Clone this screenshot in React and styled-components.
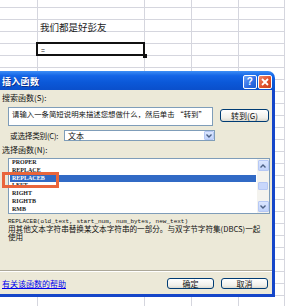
import React from "react";
import styled, { createGlobalStyle, css } from "styled-components";

const GlobalStyle = createGlobalStyle`
  html, body {
    margin: 0;
    padding: 0;
    overflow: hidden;
    background: #fff;
  }
`;

const CJK = `"Noto Sans CJK SC", "Liberation Sans", sans-serif`;

const Screen = styled.div`
  position: relative;
  width: 285px;
  height: 306px;
  overflow: hidden;
  background: #fff;
  font-family: ${CJK};
`;

const Sheet = styled.div`
  display: grid;
  grid-template-columns: 38px 107px 47px 47px 46px;
  grid-template-rows: 8px;
  grid-auto-rows: 12px;
`;

const Cell = styled.div`
  position: relative;
  box-sizing: border-box;
  border-right: 1px solid #d5d6de;
  border-bottom: 1px solid #d5d6de;
  padding: 1px 0 0 2px;
  font-size: 9.5px;
  line-height: 13px;
  white-space: nowrap;
  color: #1a1a1a;
  ${(p) =>
    p.$active &&
    css`
      font-size: 7px;
      line-height: 10px;
      padding-left: 3px;
      &::after {
        content: "";
        position: absolute;
        left: -2px;
        top: -2px;
        right: -1px;
        bottom: -1px;
        border: 2px solid #111;
      }
      &::before {
        content: "";
        position: absolute;
        right: -3px;
        bottom: -3px;
        width: 4px;
        height: 4px;
        background: #111;
        z-index: 1;
      }
    `}
`;

const Dialog = styled.div`
  position: absolute;
  left: -3px;
  top: 71px;
  width: 278px;
  display: flex;
  flex-direction: column;
`;

const TitleBar = styled.div`
  height: 19px;
  box-sizing: border-box;
  display: flex;
  align-items: center;
  padding: 2px 3px 0 5px;
  border-radius: 0 7px 0 0;
  background: linear-gradient(
    to bottom,
    #3d8ef5 0%,
    #1465e6 25%,
    #0b58d8 60%,
    #0a4fcb 100%
  );
  color: #fff;
  font-weight: bold;
  font-size: 9px;
  letter-spacing: 0.3px;
`;

const TitleText = styled.span`
  flex: 1;
  text-shadow: 1px 1px 0 #0a2d8a;
`;

const TitleButton = styled.div`
  width: 14px;
  height: 14px;
  box-sizing: border-box;
  margin-left: 1px;
  border: 1px solid #fff;
  border-radius: 2px;
  display: flex;
  align-items: center;
  justify-content: center;
  color: #fff;
  font-family: "Liberation Sans", sans-serif;
  font-weight: bold;
  font-size: 10px;
  background: ${(p) =>
    p.$close
      ? "linear-gradient(135deg, #f08a6c 0%, #e0512c 55%, #c8401f 100%)"
      : "linear-gradient(135deg, #6fa2f7 0%, #2d6ce4 60%, #1f57cf 100%)"};
`;

const Body = styled.div`
  height: 204px;
  display: flex;
  flex-direction: column;
  background: #ece9d8;
  border: 3px solid #1546c9;
  border-top: 0;
  font-size: 8px;
  color: #111;
`;

const Label = styled.div`
  height: 12px;
  line-height: 12px;
  margin-top: ${(p) => p.$top || 0}px;
  padding-left: ${(p) => p.$left || 2}px;
  white-space: nowrap;
`;

const Row = styled.div`
  display: flex;
  align-items: flex-start;
  margin-top: ${(p) => p.$top || 0}px;
  padding-left: ${(p) => p.$left || 0}px;
`;

const SearchBox = styled.div`
  width: 205px;
  height: 19px;
  box-sizing: border-box;
  margin-left: 8px;
  padding: 1px 0 0 3px;
  background: #fff;
  border: 1px solid #7f9db9;
  font-size: 7.4px;
  line-height: 10px;
  white-space: nowrap;
  overflow: hidden;
`;

const Button = styled.div`
  width: ${(p) => p.$w || 47}px;
  height: ${(p) => p.$h || 11}px;
  box-sizing: border-box;
  margin-left: ${(p) => p.$ml || 0}px;
  margin-top: ${(p) => p.$mt || 0}px;
  border: 1px solid #003c74;
  border-radius: 3px;
  background: linear-gradient(to bottom, #ffffff 0%, #f1f0ea 70%, #dcdad0 100%);
  display: flex;
  align-items: center;
  justify-content: center;
  line-height: 1;
  font-size: 8px;
`;

const CategoryLabel = styled.div`
  width: 54px;
  height: 11px;
  line-height: 11px;
  white-space: nowrap;
  font-size: 7.6px;
  letter-spacing: -0.2px;
`;

const Combo = styled.div`
  width: 151px;
  height: 11px;
  box-sizing: border-box;
  display: flex;
  align-items: center;
  background: #fff;
  border: 1px solid #7f9db9;
  padding-left: 3px;
  line-height: 9px;
`;

const ComboText = styled.span`
  flex: 1;
`;

const ArrowBox = styled.div`
  width: ${(p) => p.$w || 10}px;
  height: ${(p) => p.$h || 9}px;
  box-sizing: border-box;
  border: 1px solid #b6c8f5;
  border-radius: 1px;
  background: linear-gradient(to bottom, #dbe6fe 0%, #c1d3fb 100%);
  display: flex;
  align-items: center;
  justify-content: center;
`;

const ListBox = styled.div`
  position: relative;
  width: 262px;
  height: 56px;
  box-sizing: border-box;
  margin: 2px 0 0 8px;
  display: flex;
  background: #fff;
  border: 1px solid #7f9db9;
`;

const Items = styled.div`
  flex: 1;
  padding: 0 1px;
`;

const Item = styled.div`
  height: 7.8px;
  line-height: 7.8px;
  padding-left: 2px;
  font-family: "Liberation Serif", serif;
  font-weight: bold;
  font-size: 6px;
  color: ${(p) => (p.$selected ? "#fff" : "#1a1a1a")};
  background: ${(p) => (p.$selected ? "#316ac5" : "transparent")};
`;

const ScrollBar = styled.div`
  width: 12px;
  display: flex;
  flex-direction: column;
  justify-content: space-between;
  align-items: center;
  background: #f4f3ee;
  padding: 1px 0;
`;

const Thumb = styled.div`
  width: 10px;
  height: 8px;
  box-sizing: border-box;
  border: 1px solid #b6c8f5;
  border-radius: 1px;
  background: #c8d7fc;
`;

const Marker = styled.div`
  position: absolute;
  left: -7px;
  top: 13px;
  width: 57px;
  height: 16px;
  box-sizing: border-box;
  border: 3px solid #e9653b;
`;

const Description = styled.div`
  flex: 1;
  margin-top: 4px;
  padding-left: 8px;
  white-space: nowrap;
  font-size: 7.6px;
  line-height: 8px;
`;

const Syntax = styled.div`
  font-family: "Liberation Mono", monospace;
  font-size: 6px;
  line-height: 7px;
`;

const Separator = styled.div`
  height: 0;
  border-top: 1px solid #aca899;
  border-bottom: 1px solid #fff;
`;

const Footer = styled.div`
  display: flex;
  align-items: center;
  margin-top: 6px;
  margin-bottom: 5px;
  padding-left: 2px;
`;

const HelpLink = styled.span`
  flex: 1;
  color: #0000ee;
  text-decoration: underline;
  line-height: 11px;
`;

const Chevron = ({ up }) => (
  <svg width="6" height="4" viewBox="0 0 6 4">
    <path
      d={up ? "M0.5 3.5 L3 1 L5.5 3.5" : "M0.5 0.5 L3 3 L5.5 0.5"}
      fill="none"
      stroke="#4d6185"
      strokeWidth="1.4"
    />
  </svg>
);

const functions = ["PROPER", "REPLACE", "REPLACEB", "LEFT", "RIGHT", "RIGHTB", "RMB"];

export default function App() {
  const rows = Array.from({ length: 26 }, (_, r) => r);
  const cols = [0, 1, 2, 3, 4];

  return (
    <>
      <GlobalStyle />
      <Screen>
        <Sheet>
          {rows.map((r) =>
            cols.map((c) => (
              <Cell key={`${r}-${c}`} $active={r === 4 && c === 1}>
                {r === 2 && c === 1 ? "我们都是好彭友" : null}
                {r === 4 && c === 1 ? "=" : null}
              </Cell>
            ))
          )}
        </Sheet>

        <Dialog>
          <TitleBar>
            <TitleText>插入函数</TitleText>
            <TitleButton>?</TitleButton>
            <TitleButton $close>
              <svg width="8" height="8" viewBox="0 0 8 8">
                <path d="M1 1 L7 7 M7 1 L1 7" stroke="#fff" strokeWidth="1.8" />
              </svg>
            </TitleButton>
          </TitleBar>

          <Body>
            <Label $top={2}>搜索函数(S):</Label>
            <Row $top={3}>
              <SearchBox>请输入一条简短说明来描述您想做什么，然后单击 “转到”</SearchBox>
              <Button $w={49} $h={13} $ml={7} $mt={2}>转到(G)</Button>
            </Row>

            <Row $top={4} $left={10}>
              <CategoryLabel>或选择类别(C):</CategoryLabel>
              <Combo>
                <ComboText>文本</ComboText>
                <ArrowBox>
                  <Chevron />
                </ArrowBox>
              </Combo>
            </Row>

            <Label $top={3}>选择函数(N):</Label>
            <ListBox>
              <Items>
                {functions.map((f) => (
                  <Item key={f} $selected={f === "REPLACEB"}>
                    {f}
                  </Item>
                ))}
              </Items>
              <ScrollBar>
                <ArrowBox $w={11} $h={11}>
                  <Chevron up />
                </ArrowBox>
                <Thumb />
                <ArrowBox $w={11} $h={11}>
                  <Chevron />
                </ArrowBox>
              </ScrollBar>
              <Marker />
            </ListBox>

            <Description>
              <Syntax>REPLACEB(old_text, start_num, num_bytes, new_text)</Syntax>
              <div>用其他文本字符串替换某文本字符串的一部分。与双字节字符集(DBCS)一起</div>
              <div>使用</div>
            </Description>

            <Separator />
            <Footer>
              <HelpLink>有关该函数的帮助</HelpLink>
              <Button>确定</Button>
              <Button $ml={7}>取消</Button>
              <span style={{ width: 4 }} />
            </Footer>
          </Body>
        </Dialog>
      </Screen>
    </>
  );
}
